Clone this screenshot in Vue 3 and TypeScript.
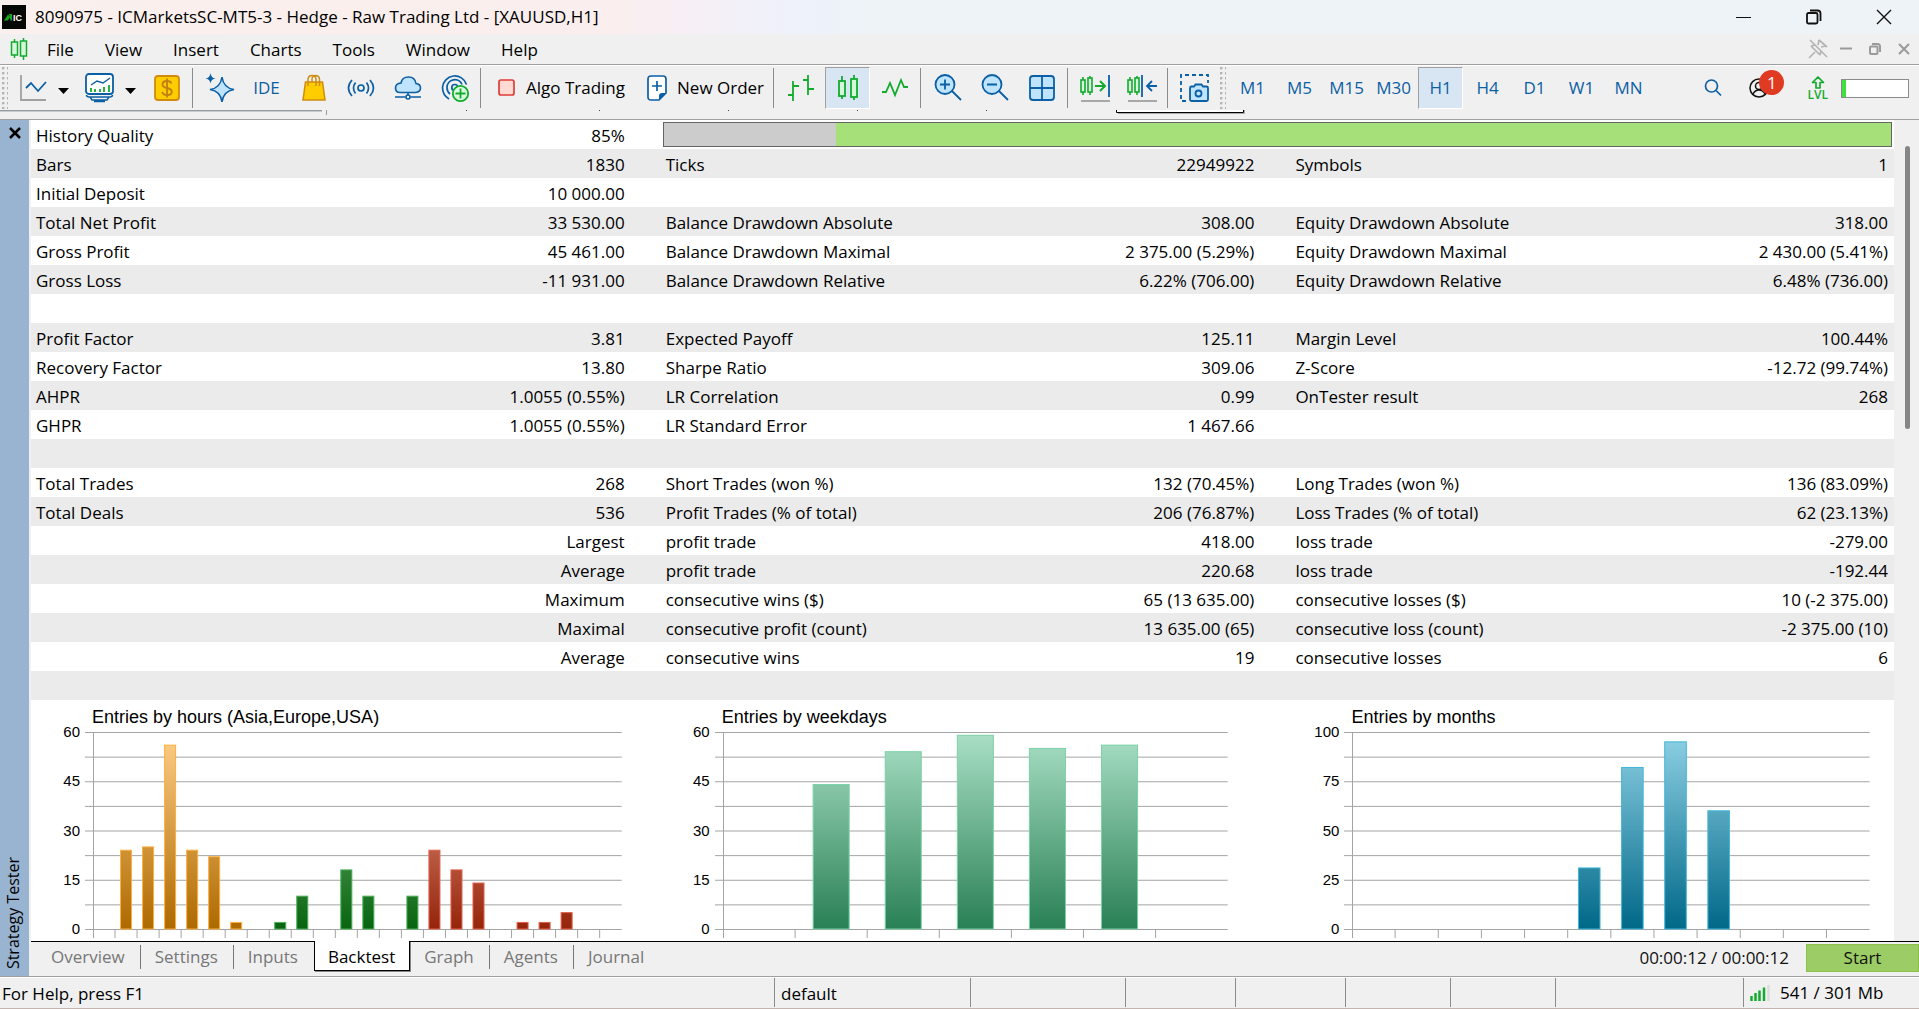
<script setup lang="ts">
interface Bar {
  slot: number
  value: number
  tone: string
}
interface Chart {
  id: string
  title: string
  max: number
  slots: number
  bars: Bar[]
}

const menus = ['File', 'View', 'Insert', 'Charts', 'Tools', 'Window', 'Help']
const timeframes = ['M1', 'M5', 'M15', 'M30', 'H1', 'H4', 'D1', 'W1', 'MN']
const tabs = ['Overview', 'Settings', 'Inputs', 'Backtest', 'Graph', 'Agents', 'Journal']

const historyMissing = 14

const rows: string[][] = [
  ['Bars', '1830', 'Ticks', '22949922', 'Symbols', '1'],
  ['Initial Deposit', '10 000.00', '', '', '', ''],
  ['Total Net Profit', '33 530.00', 'Balance Drawdown Absolute', '308.00', 'Equity Drawdown Absolute', '318.00'],
  ['Gross Profit', '45 461.00', 'Balance Drawdown Maximal', '2 375.00 (5.29%)', 'Equity Drawdown Maximal', '2 430.00 (5.41%)'],
  ['Gross Loss', '-11 931.00', 'Balance Drawdown Relative', '6.22% (706.00)', 'Equity Drawdown Relative', '6.48% (736.00)'],
  ['', '', '', '', '', ''],
  ['Profit Factor', '3.81', 'Expected Payoff', '125.11', 'Margin Level', '100.44%'],
  ['Recovery Factor', '13.80', 'Sharpe Ratio', '309.06', 'Z-Score', '-12.72 (99.74%)'],
  ['AHPR', '1.0055 (0.55%)', 'LR Correlation', '0.99', 'OnTester result', '268'],
  ['GHPR', '1.0055 (0.55%)', 'LR Standard Error', '1 467.66', '', ''],
  ['', '', '', '', '', ''],
  ['Total Trades', '268', 'Short Trades (won %)', '132 (70.45%)', 'Long Trades (won %)', '136 (83.09%)'],
  ['Total Deals', '536', 'Profit Trades (% of total)', '206 (76.87%)', 'Loss Trades (% of total)', '62 (23.13%)'],
  ['', 'Largest', 'profit trade', '418.00', 'loss trade', '-279.00'],
  ['', 'Average', 'profit trade', '220.68', 'loss trade', '-192.44'],
  ['', 'Maximum', 'consecutive wins ($)', '65 (13 635.00)', 'consecutive losses ($)', '10 (-2 375.00)'],
  ['', 'Maximal', 'consecutive profit (count)', '13 635.00 (65)', 'consecutive loss (count)', '-2 375.00 (10)'],
  ['', 'Average', 'consecutive wins', '19', 'consecutive losses', '6'],
  ['', '', '', '', '', ''],
]

const tones = [
  { id: 'asia', top: '#ffd08a', bottom: '#ae6900', edge: '#fbb040' },
  { id: 'europe', top: '#92c896', bottom: '#08640f', edge: '#4caf58' },
  { id: 'usa', top: '#f4b09c', bottom: '#95240a', edge: '#e2604c' },
  { id: 'week', top: '#aae0c6', bottom: '#298055', edge: '#7ad2a6' },
  { id: 'month', top: '#90d2e6', bottom: '#006888', edge: '#42b6d8' },
]

const series = (tone: string, start: number, values: number[]): Bar[] =>
  values.map((value, i) => ({ slot: start + i, value, tone })).filter((b) => b.value > 0)

const charts: Chart[] = [
  {
    id: 'hours',
    title: 'Entries by hours (Asia,Europe,USA)',
    max: 60,
    slots: 24,
    bars: [
      ...series('asia', 1, [24, 25, 56, 24, 22, 2]),
      ...series('europe', 8, [2, 10, 0, 18, 10, 0, 10]),
      ...series('usa', 15, [24, 18, 14, 0, 2, 2, 5]),
    ],
  },
  { id: 'weekdays', title: 'Entries by weekdays', max: 60, slots: 7, bars: series('week', 1, [44, 54, 59, 55, 56]) },
  { id: 'months', title: 'Entries by months', max: 100, slots: 12, bars: series('month', 5, [31, 82, 95, 60]) },
]

const plotHeight = 197
const axisLabels = (max: number): number[] => [4, 3, 2, 1, 0].map((n) => (max / 4) * n)
const lineY = (i: number): number => (plotHeight / 8) * i
const barHeight = (b: Bar, c: Chart): number => (b.value / c.max) * plotHeight
const edgeOf = (id: string): string => tones.find((t) => t.id === id)?.edge ?? '#888'
</script>

<template>
  <div class="app">
    <svg class="defs" width="0" height="0" aria-hidden="true">
      <defs>
        <linearGradient v-for="t in tones" :id="t.id" :key="t.id" gradientUnits="userSpaceOnUse" x1="0" y1="0" x2="0" :y2="plotHeight">
          <stop offset="0" :stop-color="t.top" />
          <stop offset="1" :stop-color="t.bottom" />
        </linearGradient>
      </defs>
    </svg>

    <header class="titlebar">
      <svg class="logo" width="24" height="24" viewBox="0 0 24 24" aria-hidden="true">
        <rect width="24" height="24" fill="#050805" />
        <path d="M2 15.500L6 9.500 8 12 6 15.500ZM7 9h3v6.500H8.500Z" fill="#17a51c" />
        <text x="11" y="15.500" class="logo-text">IC</text>
      </svg>
      <h1>8090975 - ICMarketsSC-MT5-3 - Hedge - Raw Trading Ltd - [XAUUSD,H1]</h1>
      <div class="win-controls">
        <button aria-label="Minimize"><svg width="16" height="16" viewBox="0 0 16 16"><path d="M0 8.500h15" /></svg></button>
        <button aria-label="Restore">
          <svg width="16" height="16" viewBox="0 0 16 16"><rect x="1" y="4" width="10.500" height="10.500" rx="1.500" class="thick" /><path d="M4 1.500h7.500q3 0 3 3V12" class="thick" /></svg>
        </button>
        <button aria-label="Close"><svg width="16" height="16" viewBox="0 0 16 16"><path d="M1 1l14 14M15 1L1 15" class="cross" /></svg></button>
      </div>
    </header>

    <nav class="menubar">
      <svg class="menu-icon" width="18" height="22" viewBox="0 0 18 22" aria-hidden="true">
        <g fill="#d6f7dc" stroke="#12ab2e" stroke-width="1.500">
          <path d="M4.500 1v19M13.500 0v22" />
          <rect x="1.500" y="4" width="6" height="13" />
          <rect x="10.500" y="3" width="6" height="15" />
        </g>
      </svg>
      <button v-for="m in menus" :key="m" class="menu">{{ m }}</button>
      <div class="mdi-controls">
        <button aria-label="Pin"><svg width="20" height="20" viewBox="0 0 20 20" class="pin"><path d="M2 1l17 17M1 19l6-6M11 1l8 7M11 1l-1 5M18 7l-5 1M3 7l9 9M12 16l1-4M3 7l4-1" /></svg></button>
        <button aria-label="Minimize chart"><svg width="12" height="12" viewBox="0 0 12 12"><path d="M0 5.500h12" /></svg></button>
        <button aria-label="Restore chart"><svg width="12" height="12" viewBox="0 0 12 12"><rect x="1" y="3.500" width="7.500" height="7.500" rx="1" /><path d="M3 1h5.500q2.500 0 2.500 2.500V9" /></svg></button>
        <button aria-label="Close chart"><svg width="12" height="12" viewBox="0 0 12 12"><path d="M1 1l10 10M11 1L1 11" /></svg></button>
      </div>
    </nav>

    <div class="toolbar">
      <span class="grip first"></span>
      <button class="tool" aria-label="Line chart">
        <svg class="ic" viewBox="0 0 30 30"><path d="M3 2v25h25" stroke="#a0a0a0" /><path d="M8 15l5-5 7 8 8-9" /></svg>
      </button>
      <button class="drop" aria-label="Chart types"><svg width="11" height="6" viewBox="0 0 11 6"><path d="M0 0h11L5.500 6z" fill="#000" /></svg></button>
      <button class="tool" aria-label="Indicators">
        <svg class="ic" viewBox="0 0 30 30"><rect x="1" y="1" width="27" height="20" rx="3" fill="#fff" /><path d="M6 12l6-4 6 2 7-5" stroke-width="1.500" /><path d="M6 15v4M10 16v3M15 16v3M19 14v5M24 12v7" stroke="#12ab2e" /><path d="M1.500 22q0 2 3 2h20q3 0 3-2M5 24l2 3h15l2-3M9 28.500h11" stroke-width="1.500" /></svg>
      </button>
      <button class="drop" aria-label="Indicator list"><svg width="11" height="6" viewBox="0 0 11 6"><path d="M0 0h11L5.500 6z" fill="#000" /></svg></button>
      <button class="tool" aria-label="Symbols">
        <svg class="ic" viewBox="0 0 30 30"><rect x="3" y="3" width="24" height="24" rx="3" fill="#fc0" stroke="#cf8c10" /><path d="M19.500 10.500q-1-2.500-4.500-2.500-4.500 0-4.500 3.500 0 2.500 4.500 3.500 4.800 1 4.800 3.700 0 3.300-4.800 3.300-4 0-4.800-3M15 5.500v19" stroke="#c07f10" /></svg>
      </button>
      <span class="sep"></span>
      <button class="tool" aria-label="Assistant">
        <svg class="ic" viewBox="0 0 30 30"><path d="M17 4q1.500 11 12 12.500Q18.500 18 17 29 15.500 18 5 16.500 15.500 15 17 4z" fill="#bfe4ff" stroke-width="1.500" /><path d="M5.500 0q.6 5 5 5.500-4.400.6-5 5-.6-4.400-5-5Q4.900 5 5.500 0z" fill="#0b5fa5" stroke="none" /></svg>
      </button>
      <button class="tool ide">IDE</button>
      <button class="tool" aria-label="Market">
        <svg class="ic" viewBox="0 0 30 30"><path d="M6.500 9h17L26 27H4z" fill="#fc0" stroke="#cf8c10" stroke-width="1.500" /><path d="M9 13V7q0-4.500 4-4.500T17 7v6M13 9V6q0-3.500 3.500-3.500T20.500 6v7" stroke="#cf8c10" stroke-width="1.500" /></svg>
      </button>
      <button class="tool" aria-label="Signals">
        <svg class="ic" viewBox="0 0 30 30"><g stroke-width="1.700"><circle cx="15" cy="15" r="3" /><path d="M9.500 9.500q-4 5.500 0 11M20.500 9.500q4 5.500 0 11M6 7q-7 8 0 16M24 7q7 8 0 16" /></g></svg>
      </button>
      <button class="tool" aria-label="Virtual hosting">
        <svg class="ic" viewBox="0 0 30 30"><path d="M7 19.500H22.500q5-.5 5-4.500T23 10.500Q22 4 15.500 4T8 10Q2.500 10.500 2.500 15T7 19.500z" fill="#bfe4ff" stroke-width="1.600" /><path d="M2 24h10.500M17.500 24H28M15 20v2" stroke-width="1.600" /><circle cx="15" cy="24" r="2" stroke-width="1.600" /></svg>
      </button>
      <button class="tool" aria-label="Copy trading">
        <svg class="ic" viewBox="0 0 30 30"><g stroke-width="1.700"><path d="M9 26Q2.500 22 2.500 14.500a12.300 12.300 0 0 1 24-3M10 21Q7 18.500 7 14.500a7.800 7.800 0 0 1 15-3" /><circle cx="14.800" cy="14.500" r="3" /></g><circle cx="20.500" cy="20.500" r="7.700" fill="#dafbe0" stroke="#12ab2e" /><path d="M15.500 20.500h10M20.500 15.500v10" stroke="#12ab2e" /></svg>
      </button>
      <span class="sep"></span>
      <button class="labelled">
        <svg width="18" height="18" viewBox="0 0 18 18"><rect x="1" y="1" width="15" height="15" rx="2" fill="#ffdad2" stroke="#e03c38" stroke-width="1.700" /></svg>
        Algo Trading
      </button>
      <button class="labelled order">
        <svg width="20" height="26" viewBox="0 0 20 26"><path d="M4 1h12q3 0 3 3v14l-7 7H4q-3 0-3-3V4q0-3 3-3z" fill="#fff" stroke="#0b5fa5" stroke-width="1.700" /><path d="M19 18h-4q-3 0-3 3v4z" fill="#0b5fa5" /><path d="M5 11h10M10 6v10" stroke="#0b5fa5" stroke-width="1.700" /></svg>
        New Order
      </button>
      <span class="sep"></span>
      <button class="tool" aria-label="Bar chart">
        <svg class="ic green" viewBox="0 0 30 30"><path d="M7 8v20M2 22h5M7 13h6M22 2v20M17 7h5M22 16h6" /></svg>
      </button>
      <button class="tool active" aria-label="Candlesticks">
        <svg class="ic green" viewBox="0 0 30 30"><path d="M9 3v23M21 2v25" /><rect x="6" y="8" width="6" height="15" fill="#d6f7dc" /><rect x="18" y="6" width="6" height="18" fill="#d6f7dc" /></svg>
      </button>
      <button class="tool" aria-label="Line">
        <svg class="ic green" viewBox="0 0 30 30"><path d="M2 19h4l4-9 5 12 6-15 3 7h4" /></svg>
      </button>
      <span class="sep"></span>
      <button class="tool" aria-label="Zoom in">
        <svg class="ic" viewBox="0 0 30 30"><circle cx="12" cy="11.500" r="9.500" fill="#bfe4ff" /><path d="M19 18l9 9M7 11.500h10M12 6.500v10" /></svg>
      </button>
      <button class="tool" aria-label="Zoom out">
        <svg class="ic" viewBox="0 0 30 30"><circle cx="12" cy="11.500" r="9.500" fill="#bfe4ff" /><path d="M19 18l9 9M7 11.500h10" /></svg>
      </button>
      <button class="tool" aria-label="Tile windows">
        <svg class="ic" viewBox="0 0 30 30"><rect x="3" y="3" width="24" height="24" rx="3" fill="#bfe4ff" /><path d="M15 3v24M3 15h24" /></svg>
      </button>
      <span class="sep"></span>
      <button class="tool" aria-label="Auto scroll">
        <svg class="ic" viewBox="0 0 30 30"><g stroke="#12ab2e" stroke-width="1.600"><path d="M3 4v18M10 3v19" /><rect x="1" y="7" width="4" height="12" fill="#d6f7dc" /><rect x="8" y="5" width="4" height="14" fill="#d6f7dc" /><path d="M15 13h10M20 8l5 5-5 5" stroke-width="2" /></g><path d="M29 2v22" /><path d="M1 28h29" stroke="#a0a0a0" /></svg>
      </button>
      <button class="tool" aria-label="Chart shift">
        <svg class="ic" viewBox="0 0 30 30"><g stroke="#12ab2e" stroke-width="1.600"><path d="M3 4v18M10 3v19" /><rect x="1" y="7" width="4" height="12" fill="#d6f7dc" /><rect x="8" y="5" width="4" height="14" fill="#d6f7dc" /></g><path d="M15 2v22M30 13H20M25 8l-5 5 5 5" /><path d="M1 28h29" stroke="#a0a0a0" /></svg>
      </button>
      <span class="sep"></span>
      <button class="tool" aria-label="Screenshot">
        <svg class="ic" viewBox="0 0 30 30"><path d="M6 28H1V2h27v8" stroke-dasharray="4 3" /><path d="M10 15q0-1.500 1.500-1.500H14l1.500-2h6l1.500 2h3.500q1.500 0 1.500 1.500v11.500q0 1.500-1.500 1.500h-15q-1.500 0-1.500-1.500z" fill="#bfe4ff" /><circle cx="18.500" cy="20.500" r="3" /></svg>
      </button>
      <span class="grip"></span>
      <button v-for="t in timeframes" :key="t" class="tool tf" :class="{ active: t === 'H1' }">{{ t }}</button>

      <div class="tool-right">
        <button aria-label="Search"><svg width="18" height="18" viewBox="0 0 18 18"><circle cx="7.500" cy="7" r="6" fill="none" stroke="#0b5fa5" stroke-width="1.700" /><path d="M12 11.500l5 5" stroke="#0b5fa5" stroke-width="1.700" /></svg></button>
        <button class="user" aria-label="Account, 1 notification">
          <svg width="20" height="20" viewBox="0 0 20 20"><g fill="none" stroke="#111" stroke-width="1.500"><circle cx="10" cy="10" r="9" /><circle cx="10" cy="8" r="3.500" /><path d="M4 16q2-4 6-4t6 4" /></g></svg>
          <span class="badge">1</span>
        </button>
        <button class="lvl" aria-label="LVL"><svg width="14" height="13" viewBox="0 0 14 13"><path d="M7 1l5.500 5.500H9V12H5V6.500H1.500z" fill="none" stroke="#12ab2e" stroke-width="1.700" stroke-linejoin="round" /></svg><span>LVL</span></button>
        <span class="level"><span class="level-fill"></span></span>
      </div>
    </div>
    <div class="toolbar-foot">
      <svg width="1300" height="9" viewBox="0 0 1300 9" aria-hidden="true">
        <path d="M0 .5h322M326.500 0v5" stroke="#9a9a9a" />
        <path d="M0 1.500h322" stroke="#c4ccd6" />
        <path d="M466 .5h1M599 .5h1M728 .5h1M857 .5h1M986 .5h1" stroke="#444" />
        <path d="M1117 0h126v2h-126z" fill="#fff" />
        <path d="M1116.500 0v2.500h127V0" stroke="#000" fill="none" />
        <path d="M1118 3.500h126.500V0" stroke="#aaa" fill="none" />
      </svg>
    </div>

    <div class="workspace">
      <aside class="dock">
        <button aria-label="Close panel"><svg width="12" height="12" viewBox="0 0 12 12"><path d="M1 1l10 10M11 1L1 11" stroke="#000" stroke-width="2.500" /></svg></button>
        <span class="dock-title">Strategy Tester</span>
      </aside>
      <main class="tester">
        <div class="report-wrap">
          <section class="report">
            <table>
              <colgroup>
                <col class="c-label" /><col class="c-value" /><col class="c-label" /><col class="c-value" /><col class="c-label" /><col />
              </colgroup>
              <tbody>
                <tr>
                  <th scope="row">History Quality</th>
                  <td>85%</td>
                  <td colspan="4" class="quality-cell">
                    <div class="quality" role="img" aria-label="History quality"><span :style="{ width: historyMissing + '%' }"></span></div>
                  </td>
                </tr>
                <tr v-for="(r, i) in rows" :key="i">
                  <template v-for="(cell, j) in r" :key="j">
                    <th v-if="j % 2 === 0" scope="row">{{ cell }}</th>
                    <td v-else>{{ cell }}</td>
                  </template>
                </tr>
              </tbody>
            </table>
            <div class="charts">
              <figure v-for="c in charts" :key="c.id" :class="['chart', c.id]">
                <figcaption>{{ c.title }}</figcaption>
                <div class="chart-body">
                  <div class="axis"><span v-for="n in axisLabels(c.max)" :key="n">{{ n }}</span></div>
                  <svg class="ticks" width="8" height="207" aria-hidden="true">
                    <line v-for="i in 9" :key="i" x1="0" x2="8" :y1="lineY(i - 1) + 0.5" :y2="lineY(i - 1) + 0.5" />
                  </svg>
                  <svg class="plot" height="207" aria-hidden="true">
                    <line v-for="i in 9" :key="i" x1="0" x2="100%" :y1="lineY(i - 1) + 0.5" :y2="lineY(i - 1) + 0.5" />
                    <line x1="0.500" x2="0.500" y1="0" y2="206" />
                    <line v-for="s in c.slots - 1" :key="'t' + s" :x1="(s / c.slots) * 100 + '%'" :x2="(s / c.slots) * 100 + '%'" :y1="plotHeight" y2="206" />
                    <rect
                      v-for="b in c.bars"
                      :key="'b' + b.slot"
                      :x="((b.slot + 0.25) / c.slots) * 100 + '%'"
                      :width="(0.5 / c.slots) * 100 + '%'"
                      :y="plotHeight - barHeight(b, c)"
                      :height="barHeight(b, c)"
                      :fill="'url(#' + b.tone + ')'"
                      :stroke="edgeOf(b.tone)"
                    />
                  </svg>
                </div>
              </figure>
            </div>
          </section>
          <div class="scrollbar"><span></span></div>
        </div>
        <div class="tabbar">
          <button v-for="t in tabs" :key="t" class="tab" :class="{ current: t === 'Backtest' }">{{ t }}</button>
          <span class="timer">00:00:12 / 00:00:12</span>
          <button class="start">Start</button>
        </div>
      </main>
    </div>

    <footer class="status">
      <span class="s-help">For Help, press F1</span>
      <span class="s-profile">default</span>
      <span class="s-a"></span>
      <span class="s-b"></span>
      <span class="s-b"></span>
      <span class="s-c"></span>
      <span class="s-c"></span>
      <span class="s-d"></span>
      <span class="s-net">
        <svg width="20" height="16" viewBox="0 0 20 16" aria-hidden="true"><path d="M1.500 16v-5M5.500 16V8M9.500 16V5.500M14 16V2.500" stroke="#12ab2e" stroke-width="2.500" /><path d="M18.500 16V0" stroke="#dcdcdc" stroke-width="2.500" /></svg>
        541 / 301 Mb
      </span>
    </footer>
  </div>
</template>

<style>
body {
  margin: 0;
  background: #f0f0f0;
}
</style>

<style scoped>
.app {
  display: flex;
  flex-direction: column;
  min-height: 100vh;
  background: #f0f0f0;
  color: #000;
  font: 17px/24px 'Open Sans', 'Noto Sans', sans-serif;
}
.defs {
  position: absolute;
}
button {
  display: flex;
  align-items: center;
  justify-content: center;
  margin: 0;
  padding: 0;
  border: 0;
  background: none;
  color: inherit;
  font: inherit;
}
svg {
  display: block;
  flex: none;
}
.titlebar {
  display: flex;
  align-items: center;
  height: 34px;
  padding: 0 27px 0 2px;
  background: linear-gradient(90deg, #faf0ed 0, #fbeeee 32%, #f6eff5 36%, #edf2fb 42%, #eef3f7 46%, #eef3f7 100%);
}
.titlebar h1 {
  margin: 0 auto 0 9px;
  font: inherit;
}
.logo-text {
  font: bold 9px 'Liberation Sans', sans-serif;
  fill: #fff;
}
.win-controls {
  display: flex;
  gap: 54px;
}
.win-controls svg {
  fill: none;
  stroke: #111;
}
.win-controls .thick {
  stroke-width: 1.8;
}
.win-controls .cross {
  stroke-width: 1.4;
}
.menubar {
  display: flex;
  align-items: center;
  height: 30px;
  padding: 0 9px 0 10px;
  border-bottom: 1px solid #a0a0a0;
}
.menu-icon {
  margin-right: 3px;
}
.menu {
  padding: 1px 15px 0 16px;
}
.mdi-controls {
  display: flex;
  align-items: center;
  gap: 17px;
  margin-left: auto;
}
.mdi-controls svg {
  fill: none;
  stroke: #9a9a9a;
  stroke-width: 2;
}
.mdi-controls button:first-child {
  margin-right: -5px;
}
.mdi-controls .pin {
  stroke: #b4b4b4;
  stroke-width: 1.7;
}
.toolbar {
  display: flex;
  align-items: center;
  height: 44px;
  border-top: 1px solid #fff;
}
.grip {
  width: 6px;
  height: 42px;
  margin: 0 3px 0 2px;
  background: radial-gradient(circle at 1px 1px, #b4b4b4 1px, transparent 2px) 0 0 / 5px 5px;
}
.grip.first {
  margin-right: 1px;
}
.tool {
  width: 47px;
  height: 42px;
  flex: none;
}
.tool.active {
  width: 45px;
  margin: 0 1px;
  box-sizing: border-box;
  border: 1px solid #fff;
  border-top-color: #a0a0a0;
  border-left-color: #a0a0a0;
  background: #d8e5f2;
}
.ic {
  width: 30px;
  height: 30px;
  fill: none;
  stroke: #0b5fa5;
  stroke-width: 1.8;
}
.ic.green {
  stroke: #12ab2e;
}
.drop {
  width: 20px;
  height: 42px;
  padding: 6px 0 0 2px;
  box-sizing: border-box;
  justify-content: flex-start;
}
.sep {
  width: 1px;
  height: 40px;
  margin: 0 3px 0 2px;
  background: #8c8c8c;
}
.ide,
.tf {
  color: #0b5fa5;
}
.labelled {
  height: 42px;
  padding: 0 10px 0 14px;
  gap: 10px;
}
.order {
  padding: 0 7px 0 12px;
}
.tool-right {
  display: flex;
  align-items: center;
  margin: 0 10px 0 auto;
}
.user {
  position: relative;
  margin-left: 27px;
}
.badge {
  position: absolute;
  left: 10px;
  top: -8px;
  width: 25px;
  height: 25px;
  border-radius: 50%;
  background: #e03a22;
  color: #fff;
  line-height: 25px;
}
.lvl {
  flex-direction: column;
  margin: 0 13px 0 38px;
  color: #12ab2e;
  font-size: 12px;
  font-weight: 600;
  line-height: 12px;
}
.level {
  display: flex;
  width: 66px;
  height: 17px;
  border: 1px solid #8c8c8c;
  background: #fff;
}
.level-fill {
  width: 4px;
  background: #3ee03e;
}
.toolbar-foot {
  height: 9px;
  overflow: hidden;
  border-bottom: 1px solid #a0a0a0;
}
.workspace {
  display: flex;
  flex: 1;
}
.dock {
  display: flex;
  flex-direction: column;
  align-items: center;
  justify-content: space-between;
  width: 29px;
  padding: 7px 0;
  box-sizing: border-box;
  background: #99b4d1;
}
.dock-title {
  margin-right: 4px;
  writing-mode: vertical-rl;
  transform: rotate(180deg);
  font-size: 16px;
}
.tester {
  display: flex;
  flex: 1;
  flex-direction: column;
  margin-left: 2px;
}
.report-wrap {
  display: flex;
  flex: 1;
}
.report {
  flex: 1;
  background: #fff;
}
table {
  width: 100%;
  table-layout: fixed;
  border-collapse: collapse;
}
.c-label {
  width: 17.8%;
}
.c-value {
  width: 16%;
}
tr {
  height: 29px;
}
tr:nth-child(even) {
  background: #ebebeb;
}
th,
td {
  padding: 2px 0 0;
  font-weight: 400;
  line-height: 27px;
  white-space: nowrap;
}
th {
  padding-left: 5px;
  text-align: left;
}
td {
  padding-right: 36px;
  text-align: right;
}
td:last-child {
  padding-right: 6px;
}
td.quality-cell {
  padding: 0 2px;
}
.quality {
  display: flex;
  height: 23px;
  border: 1px solid #646464;
  background: #a5e078;
}
.quality span {
  background: #ccc;
}
.charts {
  display: grid;
  grid-template-columns: 33.8% 33.8% 1fr;
  height: 240px;
  overflow: hidden;
}
.chart {
  margin: 0;
  box-sizing: border-box;
  font-family: 'Liberation Sans', Arial, sans-serif;
}
.hours {
  padding-right: 39px;
}
.weekdays {
  padding-right: 63px;
}
.months {
  padding-right: 24px;
}
figcaption {
  height: 25px;
  padding: 7px 0 0 61px;
  font-size: 18px;
  line-height: 20px;
}
.chart-body {
  display: flex;
}
.axis {
  display: flex;
  flex-direction: column;
  justify-content: space-between;
  width: 49px;
  height: 213px;
  margin: -8px 5px 0 0;
  font-size: 15px;
  line-height: 16px;
  text-align: right;
}
.ticks line,
.plot line {
  stroke: #a4a4a4;
}
.plot {
  flex: 1;
  min-width: 0;
  overflow: visible;
}
.scrollbar {
  width: 25px;
  box-sizing: border-box;
  padding: 26px 0 0 11px;
}
.scrollbar span {
  display: block;
  width: 5px;
  height: 283px;
  border-radius: 3px;
  background: #868686;
}
.tabbar {
  display: flex;
  align-items: flex-start;
  height: 34px;
  padding-left: 6px;
  border-top: 1px solid #000;
  color: #777;
}
.tab {
  position: relative;
  height: 24px;
  margin-top: 3px;
  padding: 0 15px 0 14px;
  border-right: 1px solid #777;
}
.tab:nth-child(3),
.tab:nth-child(7) {
  border-right-color: transparent;
}
.tab.current {
  height: 30px;
  margin-top: -1px;
  padding: 3px 14px 0 13px;
  border: 1px solid #000;
  border-top: 0;
  background: #fff;
  box-shadow: 1px 1px 0 #888;
  color: #000;
}
.timer {
  margin: 4px 17px 0 auto;
  color: #111;
}
.start {
  width: 113px;
  height: 28px;
  box-sizing: border-box;
  margin-top: 2px;
  border: 1px solid #8bc34a;
  background: #9ccc65;
  color: #111;
}
.status {
  display: flex;
  align-items: center;
  height: 31px;
  border-top: 1px solid #a0a0a0;
  border-bottom: 1px solid #c4b4b0;
  box-shadow: inset 0 1px #fff;
}
.status span {
  height: 29px;
  box-sizing: border-box;
  padding-left: 6px;
  border-left: 1px solid #8c8c8c;
  line-height: 32px;
}
.status .s-help {
  flex: 1;
  padding-left: 2px;
  border-left: 0;
}
.s-profile {
  width: 196px;
}
.s-a {
  width: 155px;
}
.s-b {
  width: 110px;
}
.s-c {
  width: 105px;
}
.s-d {
  width: 188px;
}
.s-net {
  display: flex;
  align-items: center;
  gap: 10px;
  width: 176px;
}
</style>
